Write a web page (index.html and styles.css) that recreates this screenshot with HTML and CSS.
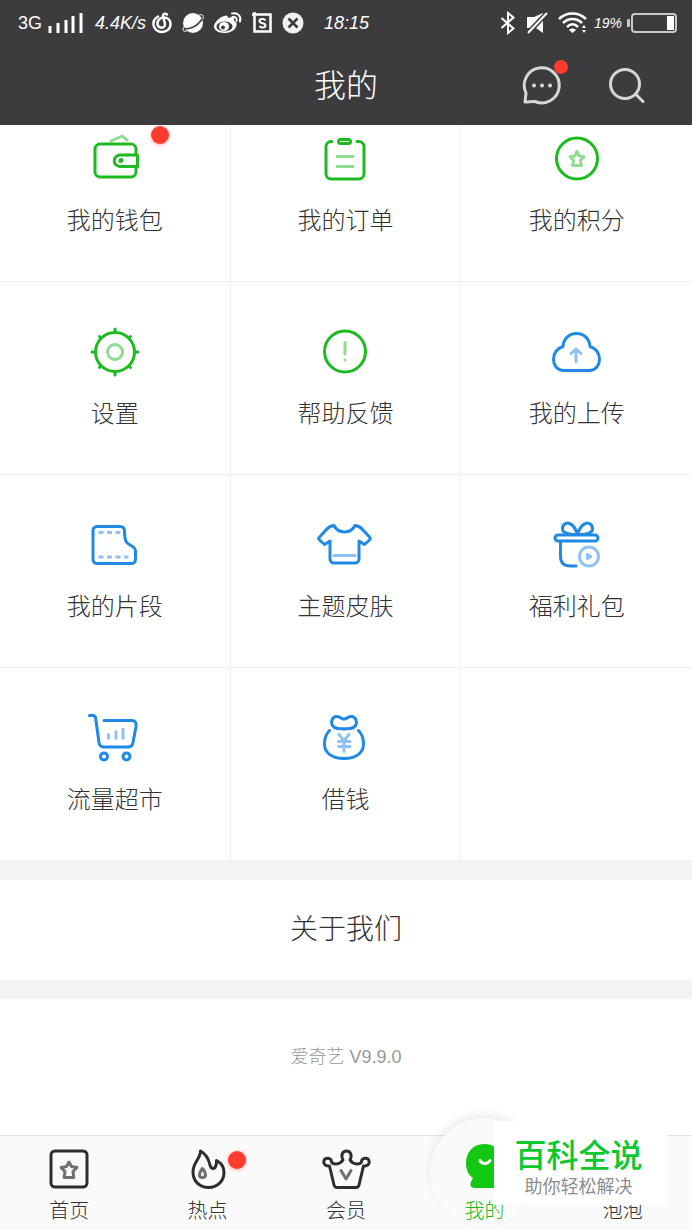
FILE: index.html
```html
<!DOCTYPE html>
<html lang="zh-CN">
<head>
    <title>我的</title>
    <meta charset="utf-8">
    <meta name="viewport" content="width=device-width, initial-scale=1">
    <link rel="stylesheet" href="styles.css">
</head>
<body>
    <header class="top">
        <div class="status">
            <span class="network">3G</span>
            <svg class="signal" width="35" height="22" viewBox="0 0 35 22">
                <path d="M2 14v7M10 11v10M18 8v13M25 4v17M33 1v20" stroke="#fff" stroke-width="3"/>
            </svg>
            <em>4.4K/s</em>
            <span class="apps">
                <svg width="20" height="22" viewBox="0 0 20 22" fill="none" stroke="#fff" stroke-width="2.5" stroke-linecap="round">
                    <path d="M6 4.5C2.500 6.500 1 9 1.500 13c.7 4 4 7 8.500 7s8.500-3 8.500-8c0-4-3-6.500-7-6.500S5 9 5.500 12.500c1 4.500 8 4 7.500-.5L11 4c-.3-2 2-3 4-1.500"/>
                </svg>
                <svg width="22" height="22" viewBox="0 0 22 22">
                    <circle cx="11" cy="11" r="10" fill="#fff"/>
                    <path d="M1 16c6 2 14-1 19-9" fill="none" stroke="#3c3c3e" stroke-width="1.5"/>
                    <path d="M2 15c-2 3-1 5 3 4M17 3c3-1 5 0 4 4" fill="none" stroke="#fff"/>
                </svg>
                <svg width="28" height="22" viewBox="0 0 28 22">
                    <path d="M10 4c2-1 4-1 4 2 4-1.500 7-.5 6 3 3 1 3 4 2 6-2 4-7 6-12 6C4 21 0 18 0 14.500 0 11 5 5.500 10 4z" fill="#fff"/>
                    <ellipse cx="10.5" cy="14.5" rx="8" ry="5" fill="#3c3c3e"/>
                    <ellipse cx="10" cy="14.5" rx="5" ry="4.5" fill="#fff"/>
                    <circle cx="9" cy="15.5" r="2" fill="#3c3c3e"/>
                    <path d="M18 1.500c6-1.500 9.500 3 8 8M18.500 5c3-.5 5 1.500 4 4" fill="none" stroke="#fff" stroke-width="2" stroke-linecap="round"/>
                </svg>
                <svg width="20" height="22" viewBox="0 0 20 22" fill="none" stroke="#fff">
                    <path d="M0 2.500h18.500v17H2.500V0" stroke-width="2.5"/>
                    <path d="M13.500 8.500c-1-2-6-2-6 .5 0 3 6 1.500 6 4.500 0 2.500-5 2.500-6 .5" stroke-width="2"/>
                </svg>
                <svg width="22" height="22" viewBox="0 0 22 22">
                    <circle cx="11" cy="11" r="10.5" fill="#f0f0f0"/>
                    <path d="M6.500 6.500l9 9M15.500 6.500l-9 9" stroke="#3c3c3e" stroke-width="2.5"/>
                </svg>
            </span>
            <em class="clock">18:15</em>
            <span class="system">
                <svg width="16" height="24" viewBox="0 0 16 24" fill="none" stroke="#fff" stroke-width="2">
                    <path d="M1.500 7l12 10.500L8 22V2l5.500 4.500L1.500 17"/>
                </svg>
                <svg width="20" height="24" viewBox="0 0 20 24">
                    <path d="M0 6h7l9-4v20l-7-5H0z" fill="#fff"/>
                    <path d="M1 22L20 2" stroke="#3c3c3e" stroke-width="5"/>
                    <path d="M1 22L20 2" stroke="#fff" stroke-width="2"/>
                </svg>
                <svg width="30" height="24" viewBox="0 0 30 24" fill="none" stroke="#fff" stroke-width="2.5">
                    <path d="M1 8c7.500-7.500 19.500-7.500 27 0M5 12c5.500-5.500 13.500-5.500 19 0M9 16c3.500-3.500 7.500-3.500 11 0"/>
                    <path d="M11 19c2-2 5-2 7 0l-3.500 3zM24 17l2-3 2 3zM24 19l2 3 2-3z" fill="#fff" stroke="none"/>
                </svg>
            </span>
            <em class="charge">19%</em>
            <svg width="50" height="20" viewBox="0 0 50 20">
                <rect x="5" y="1" width="44" height="18" rx="3" fill="none" stroke="#c8c8c8" stroke-width="2"/>
                <rect x="0" y="6" width="3" height="8" rx="1" fill="#c8c8c8"/>
                <rect x="40" y="3" width="7" height="14" fill="#fff"/>
            </svg>
        </div>
        <div class="bar">
            <h1>我的</h1>
            <div class="actions">
                <button type="button" aria-label="消息">
                    <svg width="48" height="48" viewBox="0 0 48 48" fill="none" stroke="#d6d6d6" stroke-width="3" stroke-linejoin="round">
                        <path d="M8 31A17.500 17.500 0 1 1 17 39.500C14 39 11 40 7 40z"/>
                        <path d="M16 23.500h.01M24 23.500h.01M32 23.500h.01" stroke-width="4" stroke-linecap="round"/>
                    </svg>
                    <i class="dot"></i>
                </button>
                <button type="button" aria-label="搜索">
                    <svg width="48" height="48" viewBox="0 0 48 48" fill="none" stroke="#d6d6d6" stroke-width="3" stroke-linecap="round">
                        <circle cx="22" cy="22" r="14.5"/>
                        <path d="M32.500 32L40 39.500"/>
                    </svg>
                </button>
            </div>
        </div>
    </header>

    <main>
        <nav class="grid">
            <a href="#" class="green">
                <svg viewBox="0 0 56 56">
                    <path class="pale" d="M24 10l11-5 5 4"/>
                    <rect x="8" y="13" width="41" height="33" rx="5"/>
                    <path d="M50.500 24H33a5.500 5.500 0 0 0 0 11.500h17.500z" fill="#fff"/>
                    <circle class="fill" cx="34" cy="29.5" r="2.5"/>
                </svg>
                <span>我的钱包</span>
                <i class="dot"></i>
            </a>
            <a href="#" class="green">
                <svg viewBox="0 0 56 56">
                    <path d="M15 10.500h-1a5 5 0 0 0-5 5V43a5 5 0 0 0 5 5h28a5 5 0 0 0 5-5V15.500a5 5 0 0 0-5-5h-2"/>
                    <rect x="21.5" y="8.5" width="12" height="4" rx="2"/>
                    <path class="pale" d="M20 25.500h16M20 35.500h16"/>
                </svg>
                <span>我的订单</span>
            </a>
            <a href="#" class="green">
                <svg viewBox="0 0 56 56">
                    <circle cx="28" cy="27.5" r="20.5"/>
                    <path class="pale" d="M28 20.500l2.200 4.600 4.800.6-3.500 3.500.9 5.300H23.600l.9-5.300-3.500-3.500 4.800-.6z"/>
                </svg>
                <span>我的积分</span>
            </a>
            <a href="#" class="green">
                <svg viewBox="0 0 56 56">
                    <circle cx="28" cy="28" r="19.5"/>
                    <path d="M28 8V5M28 48v3M8 28H5M48 28h3M14 14l-1.500-1.500M42 14l1.500-1.500M14 42l-1.500 1.500M42 42l1.500 1.500"/>
                    <circle class="pale" cx="28" cy="28" r="7.5"/>
                </svg>
                <span>设置</span>
            </a>
            <a href="#" class="green">
                <svg viewBox="0 0 56 56">
                    <circle cx="28" cy="27.5" r="20.5"/>
                    <path class="pale" d="M28 18.500v11.500M28 36h.01"/>
                </svg>
                <span>帮助反馈</span>
            </a>
            <a href="#" class="blue">
                <svg viewBox="0 0 56 56">
                    <path d="M15 46.500C8 46.500 4.500 41 4.500 35.500c0-6 3.500-11 9.500-13C14.500 15 20 9.500 27.500 9.500S40.500 15 41 22.500c6 2 9.500 7 9.500 13C50.500 41 47 46.500 40 46.500z"/>
                    <path class="pale" d="M27 38V25M22 29.500l5-4.500 5 4.500"/>
                </svg>
                <span>我的上传</span>
            </a>
            <a href="#" class="blue">
                <svg viewBox="0 0 56 56">
                    <path d="M10 9.500h23c3 0 4.500 2 4.500 4.500 0 5 .5 8 1.500 10.500 1.500 4 9.500 4 9.500 9.500v8.500a4 4 0 0 1-4 4H10a4 4 0 0 1-4-4V13.500a4 4 0 0 1 4-4z"/>
                    <path class="pale butt" d="M11.500 15.500h24M11.500 40h30" stroke-dasharray="5 3.5"/>
                </svg>
                <span>我的片段</span>
            </a>
            <a href="#" class="blue">
                <svg viewBox="0 0 56 56">
                    <path d="M17 8.500C19 12.500 22 15 27.500 15S36 12.500 38 8.500c4 .5 6 2 8 4.500l6.500 7c1 1 1 2 0 3L47.500 27.500 42 24V42a4 4 0 0 1-4 4H17a4 4 0 0 1-4-4V24L7.500 27.500 2.500 23c-1-1-1-2 0-3L9 13c2-2.500 4-4 8-4.500z"/>
                    <path class="pale" d="M17 38.500h21"/>
                </svg>
                <span>主题皮肤</span>
            </a>
            <a href="#" class="blue">
                <svg viewBox="0 0 56 56">
                    <path d="M28.500 17.500C20 18 14 16 13.500 12.500 13 8 17 5 20.500 6.500c4 1.500 6.500 6 8 11C30 12.500 32.500 8 36.500 6.500c3.500-1.500 7.500 1.500 7 6C43 16 37 18 28.500 17.500z"/>
                    <rect x="6" y="18" width="43" height="6" rx="3" fill="#fff"/>
                    <path d="M11.500 25v14c0 7 3 10 10 10h5.500"/>
                    <circle class="pale" cx="40" cy="39.5" r="9.5"/>
                    <path class="pale fill" d="M38.500 37.500v4l3.500-2z"/>
                </svg>
                <span>福利礼包</span>
            </a>
            <a href="#" class="blue">
                <svg viewBox="0 0 56 56">
                    <path d="M2.500 5.500H6c1.500 0 2 .5 2.500 2l3.500 25c.5 3 2 4.500 5 4.500h24c3 0 4.500-1.500 5-4.500l3-16c.5-3.500-1-6-4-6H17"/>
                    <circle cx="17" cy="46.5" r="3.5"/>
                    <circle cx="39.5" cy="46.5" r="3.5"/>
                    <path class="pale butt" d="M21.500 29.500v-6M29 29.500v-9M36 29.500V18"/>
                </svg>
                <span>流量超市</span>
            </a>
            <a href="#" class="blue">
                <svg viewBox="0 0 56 56">
                    <path d="M21 18.500C16 18 13.500 14 15 10c1.500-4 6-4.500 9-2 2 1.500 4 1.500 6 0 3-2.500 7.500-2 9 2 1.500 4-1 8-6 8.500-4 .5-8 .5-12 0z"/>
                    <path d="M12.500 20.500C9 24 7.500 29 7.500 34c0 9 7.500 14.500 19.500 14.500S46.500 43 46.500 34c0-5-1.500-10-5-13.500"/>
                    <path class="pale" d="M22 24.500l5 6.500 5-6.500M21.500 31.500h11.500M21.500 36.500h11.500M27 31v10.500"/>
                </svg>
                <span>借钱</span>
            </a>
            <div class="empty"></div>
        </nav>
        <a href="#" class="about">关于我们</a>
        <p class="version">爱奇艺 V9.9.0</p>
    </main>

    <nav class="tabs">
        <a href="#">
            <svg viewBox="0 0 48 48">
                <rect x="6" y="6" width="36" height="36" rx="4"/>
                <path class="pale" d="M24 17l2.500 4.500 5.500 1-4 4 .8 6H19.200l.8-6-4-4 5.500-1z"/>
            </svg>
            <span>首页</span>
        </a>
        <a href="#">
            <svg viewBox="0 0 48 48">
                <path d="M16.500 6c0 8-7.500 11-7.500 21 0 9 6.500 15.500 15.500 15.500S40 36 40 27.500c0-5-2.500-9.500-7.500-12 0 4.500-.5 8-3.500 8-5.500 0 0-10-12.500-17.500z"/>
                <path class="pale" d="M18.500 23.500c-4 5-4 9 0 9s4-4 0-9z"/>
            </svg>
            <span>热点</span>
            <i class="dot"></i>
        </a>
        <a href="#">
            <svg viewBox="0 0 48 48">
                <path d="M15 42.500c-1.500 0-2.500-.5-3-2.500L7.500 21C3 21.500 1 18.500 2 15.500c1.500-3.500 7-3 7.500 1 0 3.500 8.500 3.500 11.500-1.500-2.500-5-.5-9 3.500-9s6 4 3.500 9c3 5 11.500 5 11.500 1.500.5-4 6-4.500 7.500-1 1 3-1 6-5.500 5.500L37 40c-.5 2-1.500 2.500-3 2.500z"/>
                <path class="pale" d="M19 25.500l5 8.500 5-8.500"/>
            </svg>
            <span>会员</span>
        </a>
        <a href="#" class="current">
            <svg viewBox="0 0 48 48">
                <path class="fill" d="M24-1c11 0 19 7.500 19 18 0 7-3 11-7 14v12H15c-4 0-5.500-3-4-6l2-4C8 30 6 24 6 18 6 7.500 13-1 24-1z"/>
                <path d="M20 15.500c2 4 7.500 4 10 0" stroke="#fff"/>
            </svg>
            <span>我的</span>
        </a>
        <a href="#">
            <svg viewBox="0 0 48 48"></svg>
            <span>泡泡</span>
        </a>
    </nav>

    <aside class="mark">
        <strong>百科全说</strong>
        <small>助你轻松解决</small>
    </aside>
</body>
</html>
```
FILE: styles.css
```css
* {
    box-sizing: border-box;
}
body {
    display: flex;
    flex-direction: column;
    min-height: 100vh;
    margin: 0;
    background: #fff;
    color: #333;
    font-family: "Liberation Sans", "Noto Sans CJK SC", sans-serif;
    font-weight: 300;
}
a {
    color: inherit;
    text-decoration: none;
}
svg {
    flex: none;
    display: block;
    overflow: visible;
}

/* header */
.top {
    position: relative;
    z-index: 1;
    background: #3c3c3e;
    color: #fff;
}
.status {
    display: flex;
    align-items: center;
    height: 46px;
    padding: 0 15px 0 18px;
    font-size: 18px;
}
.signal {
    margin: 0 12px 0 6px;
}
.apps {
    display: flex;
    gap: 10px;
    margin-left: 6px;
}
.clock {
    margin-left: 20px;
}
.system {
    display: flex;
    gap: 11px;
    margin: 0 6px 0 auto;
}
.charge {
    margin-right: 5px;
    font-size: 14px;
}
.bar {
    display: grid;
    grid-template-columns: 1fr auto 1fr;
    align-items: center;
    height: 79px;
}
h1 {
    grid-column: 2;
    margin: 0;
    font-size: 32px;
    line-height: 40px;
    font-weight: 300;
}
.actions {
    display: flex;
    justify-content: flex-end;
    gap: 37px;
    padding-right: 41px;
}
button {
    position: relative;
    padding: 0;
    border: 0;
    background: none;
}
.dot {
    position: absolute;
    width: 18px;
    height: 18px;
    border-radius: 50%;
    background: #ff3b30;
    box-shadow: 0 1px 4px rgba(255, 59, 48, .4);
}
button .dot {
    top: -2px;
    right: -2px;
    width: 14px;
    height: 14px;
    box-shadow: none;
}

/* menu */
main {
    flex: 1;
}
.grid {
    display: grid;
    grid-template-columns: repeat(3, 1fr);
    margin-top: -36px;
}
.grid a,
.empty {
    position: relative;
    display: flex;
    flex-direction: column;
    align-items: center;
    height: 193px;
    padding-top: 42px;
    border-right: 1px solid #f0f0f0;
    border-bottom: 1px solid #f0f0f0;
    font-size: 24px;
    line-height: 32px;
}
.grid > :nth-child(3n) {
    border-right: 0;
}
.grid svg {
    width: 56px;
    height: 56px;
    margin-bottom: 18px;
    fill: none;
    stroke: currentColor;
    stroke-width: 3;
    stroke-linecap: round;
    stroke-linejoin: round;
}
.grid span {
    color: #333;
}
.green {
    color: #1fb922;
}
.blue {
    color: #2088e5;
}
.green .pale {
    stroke: #90dc92;
}
.blue .pale {
    stroke: #8fc2f2;
}
svg .butt {
    stroke-linecap: butt;
}
.grid .fill {
    fill: currentColor;
    stroke: none;
}
.grid .pale.fill {
    fill: #8fc2f2;
    stroke: #8fc2f2;
}
.grid .dot {
    top: 37px;
    left: calc(50% + 36px);
}
.about {
    display: block;
    padding: 30px 0;
    border: solid #f2f3f5;
    border-width: 19px 0;
    font-size: 28px;
    line-height: 40px;
    text-align: center;
}
.version {
    margin: 0;
    padding: 42px 0;
    color: #999;
    font-size: 18px;
    line-height: 32px;
    text-align: center;
}

/* bottom tabs */
.tabs {
    display: flex;
    border-top: 1px solid #e2e2e2;
    background: #fafafa;
}
.tabs a {
    position: relative;
    flex: 1;
    display: flex;
    flex-direction: column;
    align-items: center;
    padding: 9px 0 7px;
    font-size: 20px;
    line-height: 24px;
}
.tabs svg {
    position: relative;
    width: 48px;
    height: 48px;
    margin-bottom: 6px;
    fill: none;
    stroke: #2e2e2e;
    stroke-width: 3;
    stroke-linecap: round;
    stroke-linejoin: round;
}
.tabs span {
    position: relative;
}
.tabs .pale {
    stroke: #707070;
}
.tabs .fill {
    fill: #12c812;
    stroke: none;
}
.tabs .dot {
    top: 15px;
    left: calc(50% + 20px);
}
.tabs .current {
    color: #1fb922;
}
.current::before {
    content: "";
    position: absolute;
    top: -18px;
    left: 50%;
    width: 108px;
    height: 108px;
    margin-left: -54px;
    border-radius: 50%;
    background: #fafafa;
    box-shadow: 0 -4px 8px rgba(0, 0, 0, .08);
}

/* site mark over the tabs */
.mark {
    position: fixed;
    right: 25px;
    bottom: 25px;
    z-index: 2;
    display: flex;
    flex-direction: column;
    align-items: center;
    width: 173px;
    padding: 16px 4px 6px 0;
    background: #fff;
    font-weight: 400;
}
.mark strong {
    color: #0fc82f;
    font-size: 32px;
    line-height: 38px;
    font-weight: 500;
}
.mark small {
    color: #8c8c8c;
    font-size: 18px;
    line-height: 24px;
}
```
